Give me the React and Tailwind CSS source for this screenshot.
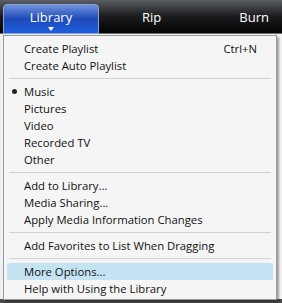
import React from 'react';

const items = [
  { label: 'Create Playlist', shortcut: 'Ctrl+N' },
  { label: 'Create Auto Playlist' },
  { sep: true },
  { label: 'Music', checked: true },
  { label: 'Pictures' },
  { label: 'Video' },
  { label: 'Recorded TV' },
  { label: 'Other' },
  { sep: true },
  { label: 'Add to Library...' },
  { label: 'Media Sharing...' },
  { label: 'Apply Media Information Changes' },
  { sep: true },
  { label: 'Add Favorites to List When Dragging' },
  { sep: true },
  { label: 'More Options...', active: true },
  { label: 'Help with Using the Library' },
];

const Tab = ({ label, active }) => {
  if (active) {
    return (
      <div className="relative w-[96px] h-[30px] mt-[4px] ml-[3px] rounded-t-[4px] border border-[#8aa3cf] bg-gradient-to-b from-[#6f92dc] via-[#1f49b8] to-[#1c5ee0] flex items-center justify-center">
        <span className="text-white text-[13px] -mt-[3px]">{label}</span>
        <span className="absolute bottom-[2px] left-1/2 -translate-x-1/2 w-0 h-0 border-l-[3px] border-r-[3px] border-t-[4px] border-l-transparent border-r-transparent border-t-white"></span>
      </div>
    );
  }
  return (
    <div className="h-[30px] mt-[4px] flex items-center">
      <span className="text-white text-[13px] -mt-[3px]">{label}</span>
    </div>
  );
};

export default function App() {
  return (
    <div
      className="relative w-[282px] h-[303px] overflow-hidden bg-[#eef0f2]"
      style={{ fontFamily: '"Open Sans", "Noto Sans", sans-serif' }}
    >
      {/* Top nav bar */}
      <div className="h-[34px] bg-gradient-to-b from-[#5c5f64] via-[#1a1b1d] to-[#050505] border-b border-[#6a6d72] flex items-start">
        <Tab label="Library" active />
        <div className="ml-[43px]">
          <Tab label="Rip" />
        </div>
        <div className="ml-[78px]">
          <Tab label="Burn" />
        </div>
      </div>

      {/* content behind */}
      <div className="absolute right-0 top-[34px] w-[6px] h-[269px] bg-[#f3f3f3] border-l border-[#c8c8c8]"></div>
      <div className="absolute left-0 bottom-0 w-full h-[4px] bg-[#4a4a4a]"></div>

      {/* Dropdown menu */}
      <div className="absolute left-[3px] top-[35px] w-[274px] h-[265px] bg-[#f5f5f5] border border-[#9a9a9a] shadow-[2px_2px_2px_rgba(0,0,0,0.35)] pt-[4px] px-[3px] text-[11.3px] text-[#111]">
        {items.map((it, i) =>
          it.sep ? (
            <div key={i} className="h-[9px] flex items-center px-[2px]">
              <div className="w-full h-px bg-[#d2d2d2]"></div>
            </div>
          ) : (
            <div
              key={i}
              className={`relative h-[17px] flex items-center pl-[17px] pr-[16px] ${it.active ? 'bg-[#c4e4f4]' : ''}`}
            >
              {it.checked && (
                <span className="absolute left-[5px] top-[6px] w-[5px] h-[5px] rounded-full bg-[#222]"></span>
              )}
              <span className="flex-1 leading-none">{it.label}</span>
              {it.shortcut && <span className="leading-none">{it.shortcut}</span>}
            </div>
          )
        )}
      </div>
    </div>
  );
}
